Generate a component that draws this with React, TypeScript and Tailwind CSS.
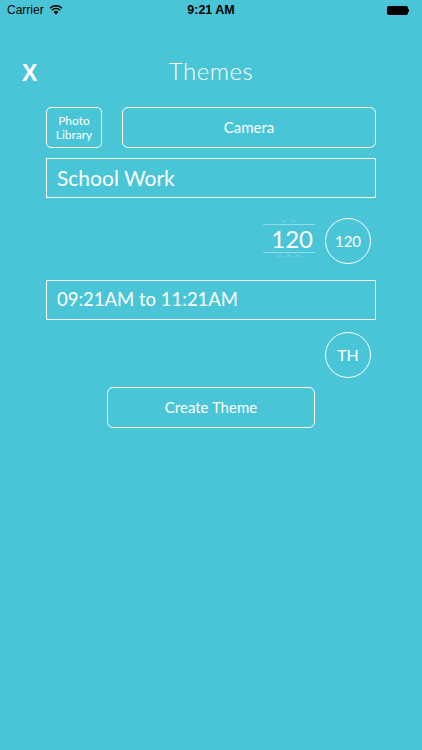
function Arcs({ n, up }: { n: number; up?: boolean }) {
  return (
    <svg width={n * 9} height="5" viewBox={`0 0 ${n * 9} 5`}>
      {Array.from({ length: n }).map((_, i) => (
        <path
          key={i}
          d={up ? `M${i * 9 + 1} 4.5 Q${i * 9 + 4} 0.5 ${i * 9 + 7} 4.5` : `M${i * 9 + 1} 0.5 Q${i * 9 + 4} 4.5 ${i * 9 + 7} 0.5`}
          stroke="rgba(255,255,255,0.3)"
          strokeWidth="1"
          fill="none"
        />
      ))}
    </svg>
  );
}

export default function App() {
  return (
    <div
      className="w-[422px] h-[750px] bg-[#49c5d7] text-white overflow-hidden"
      style={{ fontFamily: '"Lato", "Noto Sans", sans-serif' }}
    >
      {/* status bar */}
      <div className="relative h-5 flex items-center px-[7px] text-black text-[12px]" style={{ fontFamily: '"Liberation Sans", sans-serif' }}>
        <span>Carrier</span>
        <svg width="14" height="10" viewBox="0 0 14 10" className="ml-[5px]">
          <path d="M7 9.5 L4.6 6.9 A3.4 3.4 0 0 1 9.4 6.9 Z" fill="black" />
          <path d="M2.9 5.2 A5.8 5.8 0 0 1 11.1 5.2" stroke="black" strokeWidth="1.5" fill="none" />
          <path d="M1 3.2 A8.5 8.5 0 0 1 13 3.2" stroke="black" strokeWidth="1.5" fill="none" />
        </svg>
        <span className="absolute left-0 right-0 text-center font-bold text-[12.5px] pointer-events-none">9:21 AM</span>
        <div className="ml-auto mr-[6px] flex items-center">
          <div className="w-[21px] h-[9px] bg-black rounded-[2px]" />
          <div className="w-[1.5px] h-[3px] bg-black" />
        </div>
      </div>

      {/* header */}
      <div className="relative h-[62px] flex items-center justify-center">
        <span className="absolute left-[22px] top-[42px] text-[23px] font-bold leading-none" style={{ fontFamily: '"Liberation Sans", sans-serif' }}>X</span>
        <span className="text-[24px] font-light tracking-[0.5px] pt-[40px] leading-none">Themes</span>
      </div>

      <div className="flex flex-col px-[46px] mt-[25px]">
        <div className="flex gap-[20px] h-[41px]">
          <button className="w-[56px] border border-white rounded-[5px] text-[12px] leading-[14px] flex flex-col items-center justify-center">
            <span>Photo</span>
            <span>Library</span>
          </button>
          <button className="flex-1 border border-white rounded-[6px] text-[15px]">Camera</button>
        </div>

        <div className="mt-[10px] h-[40px] border border-white flex items-center pl-[10px] text-[21px]">
          School Work
        </div>

        <div className="flex justify-end items-center gap-[10px] mt-[20px] mr-[5px]">
          <div className="w-[52px] h-[46px] flex flex-col items-center">
            <div className="h-[6px] flex items-end"><Arcs n={2} /></div>
            <div className="w-full h-[29px] border-y border-white/40 flex items-center justify-end pr-[2px] text-[24px] leading-none">
              120
            </div>
            <div className="h-[6px] flex items-start"><Arcs n={3} up /></div>
          </div>
          <div className="w-[46px] h-[46px] rounded-full border border-white flex items-center justify-center text-[15px]">
            120
          </div>
        </div>

        <div className="mt-[16px] h-[40px] border border-white flex items-center pl-[10px] text-[18.5px]">
          09:21AM to 11:21AM
        </div>

        <div className="flex justify-end mt-[12px] mr-[5px]">
          <div className="w-[46px] h-[46px] rounded-full border border-white flex items-center justify-center text-[16px]">
            TH
          </div>
        </div>

        <div className="flex justify-center mt-[9px]">
          <button className="w-[208px] h-[41px] border border-white rounded-[6px] text-[15px]">Create Theme</button>
        </div>
      </div>
    </div>
  );
}
